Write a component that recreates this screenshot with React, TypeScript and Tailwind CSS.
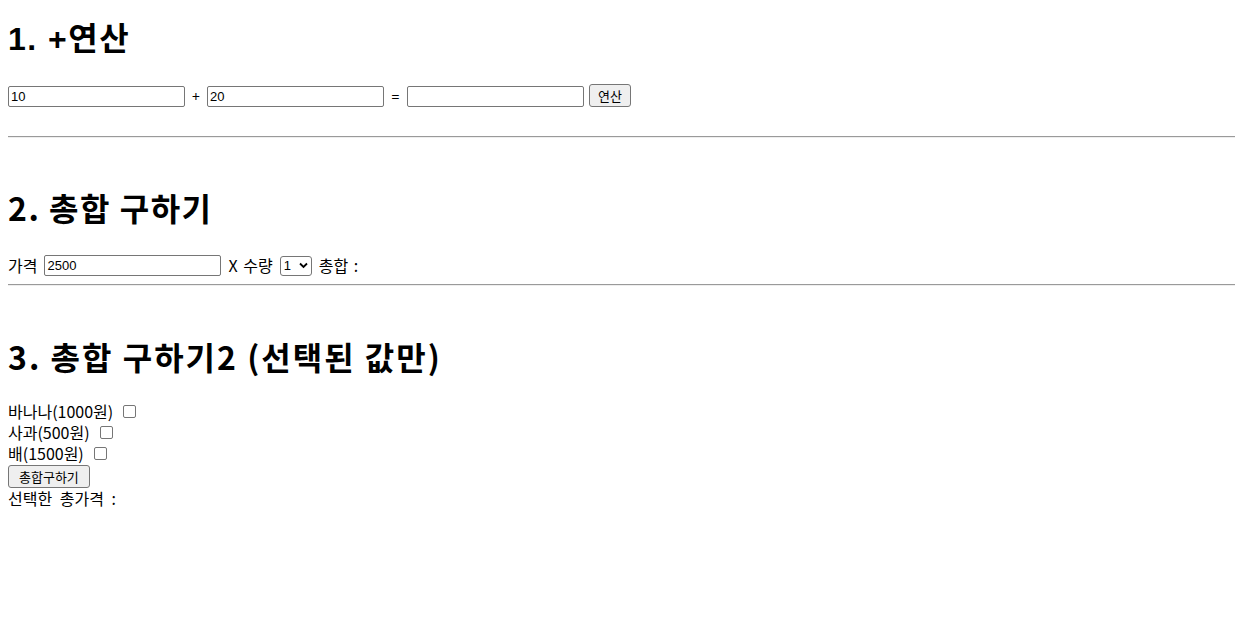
const kr = "font-['Noto_Sans_CJK_KR','Noto_Sans',sans-serif]";
const ui = "font-['Liberation_Sans','Noto_Sans_CJK_KR',sans-serif]";

function TextBox({ value }: { value?: string }) {
    return (
        <input
            type="text"
            defaultValue={value}
            className={`${ui} w-[177px] h-[21px] px-[2px] text-[13px] text-black border border-[#767676] rounded-[2px] bg-white outline-none`}
        />
    );
}

function Check() {
    return <span className="inline-block w-[13px] h-[13px] ml-[10px] border border-[#767676] rounded-[2px] bg-white" />;
}

function Rule({ className }: { className: string }) {
    return <div className={`-mr-2 border-t border-t-[#9a9a9a] border-b border-b-[#eeeeee] ${className}`} />;
}

export default function App() {
    return (
        <div className={`${kr} px-2 pb-10 text-black text-[16px] leading-[21px] bg-white min-h-screen`}>
            <div className="pt-[21px]">
                <h1 className={`${ui} text-[32px] font-bold leading-[37px] tracking-[1.5px]`}>1. +연산</h1>
            </div>
            <div className="mt-[26px] flex items-end h-[23px]">
                <TextBox value="10" />
                <span className="w-[22px] text-center text-[14px] leading-[21px]">+</span>
                <TextBox value="20" />
                <span className="w-[23px] text-center text-[14px] leading-[21px]">=</span>
                <TextBox />
                <button className={`${kr} ml-[5px] h-[23px] px-[8px] text-[13px] leading-[19px] bg-[#efefef] border border-[#767676] rounded-[3px]`}>
                    연산
                </button>
            </div>
            <Rule className="mt-[29px]" />

            <h1 className="mt-[48px] text-[32px] font-bold leading-[42px] tracking-[1.5px]">2. 총합 구하기</h1>
            <div className="mt-[27px] flex items-center h-[21px] gap-[7px]">
                <span>가격</span>
                <TextBox value="2500" />
                <span className="[word-spacing:2px]">X 수량</span>
                <span className="flex items-center justify-between w-[32px] h-[20px] px-[3px] border border-[#767676] rounded-[3px] bg-white text-[13px] leading-[18px]">
                    <span className={ui}>1</span>
                    <svg width="9" height="7" viewBox="0 0 9 7">
                        <path d="M1 1.5 L4.5 5 L8 1.5" fill="none" stroke="black" strokeWidth="1.8" />
                    </svg>
                </span>
                <span className="[word-spacing:2px]">총합 :</span>
            </div>
            <Rule className="mt-[8px]" />

            <h1 className="mt-[49px] text-[32px] font-bold leading-[42px] tracking-[2px]">3. 총합 구하기2 (선택된 값만)</h1>
            <div className="mt-[24px]">
                <div className="flex items-center h-[21px]">
                    바나나(1000원)
                    <Check />
                </div>
                <div className="flex items-center h-[21px]">
                    사과(500원)
                    <Check />
                </div>
                <div className="flex items-center h-[21px]">
                    배(1500원)
                    <Check />
                </div>
                <button className="h-[23px] mt-[1px] px-[10px] text-[13px] leading-[19px] bg-[#efefef] border border-[#767676] rounded-[3px]">
                    총합구하기
                </button>
                <div className="h-[21px] [word-spacing:4px]">선택한 총가격 :</div>
            </div>
        </div>
    );
}
